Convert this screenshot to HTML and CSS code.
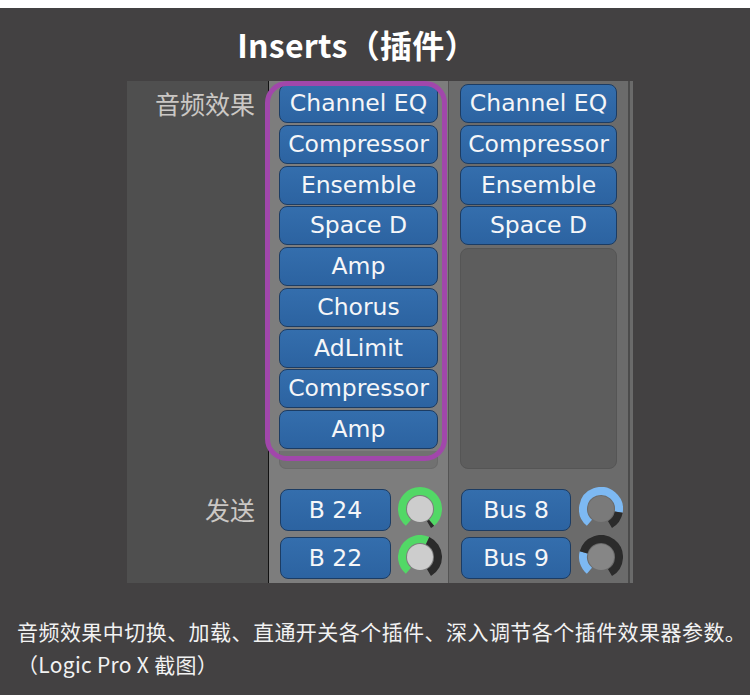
FILE: index.html
```html
<!DOCTYPE html>
<html lang="zh">
<head>
<meta charset="utf-8">
<title>Inserts</title>
<link rel="stylesheet" href="styles.css">
</head>
<body>
<div class="topstrip"></div>
<h1 class="title">Inserts（插件）</h1>
<div class="panel">
  <div class="label label-fx">音频效果</div>
  <div class="col col1 inserts">
    <div class="btn">Channel EQ</div>
    <div class="btn">Compressor</div>
    <div class="btn">Ensemble</div>
    <div class="btn">Space D</div>
    <div class="btn">Amp</div>
    <div class="btn">Chorus</div>
    <div class="btn">AdLimit</div>
    <div class="btn">Compressor</div>
    <div class="btn">Amp</div>
    <div class="slot slot-short"></div>
  </div>
  <div class="col col2 inserts">
    <div class="btn">Channel EQ</div>
    <div class="btn">Compressor</div>
    <div class="btn">Ensemble</div>
    <div class="btn">Space D</div>
    <div class="slot slot-long"></div>
  </div>
  <div class="edge"></div>
  <div class="label label-send">发送</div>
  <div class="col col1 sends">
    <div class="send-row">
      <div class="btn send-btn">B 24</div>
      <svg class="knob" viewBox="0 0 44 44" width="44" height="44">
        <path d="M10.43 35.79 A18 18 0 1 1 33.57 35.79" class="arc-green"/>
        <path d="M33.57 35.79 A18 18 0 0 1 31 37.59" class="arc-dark"/>
        <circle cx="22" cy="22" r="13" class="cap-light"/>
      </svg>
    </div>
    <div class="send-row">
      <div class="btn send-btn">B 22</div>
      <svg class="knob" viewBox="0 0 44 44" width="44" height="44">
        <path d="M10.43 35.79 A18 18 0 0 1 29.61 5.69" class="arc-green"/>
        <path d="M29.61 5.69 A18 18 0 0 1 31 37.59" class="arc-dark"/>
        <circle cx="22" cy="22" r="13" class="cap-light"/>
      </svg>
    </div>
  </div>
  <div class="col col2 sends">
    <div class="send-row">
      <div class="btn send-btn">Bus 8</div>
      <svg class="knob" viewBox="0 0 44 44" width="44" height="44">
        <path d="M10.43 35.79 A18 18 0 1 1 39.73 25.13" class="arc-blue"/>
        <path d="M39.73 25.13 A18 18 0 0 1 31 37.59" class="arc-dark"/>
        <circle cx="22" cy="22" r="13" class="cap-dark"/>
      </svg>
    </div>
    <div class="send-row">
      <div class="btn send-btn">Bus 9</div>
      <svg class="knob" viewBox="0 0 44 44" width="44" height="44">
        <path d="M10.43 35.79 A18 18 0 0 1 4.61 17.34" class="arc-blue"/>
        <path d="M4.61 17.34 A18 18 0 1 1 31 37.59" class="arc-dark"/>
        <circle cx="22" cy="22" r="13" class="cap-mid"/>
      </svg>
    </div>
  </div>
  <div class="highlight"></div>
</div>
<div class="caption">
  <p>音频效果中切换、加载、直通开关各个插件、深入调节各个插件效果器参数。</p>
  <p class="caption-sub">（Logic Pro X 截图）</p>
</div>
</body>
</html>
```

FILE: styles.css
```css
html, body {
  margin: 0;
  padding: 0;
}
body {
  background: #434142;
  width: 750px;
  height: 695px;
  overflow: hidden;
  font-family: "Noto Sans CJK SC", "Noto Sans", sans-serif;
}
.topstrip {
  height: 8px;
  background: #ffffff;
}
.title {
  margin: 0;
  height: 73px;
  line-height: 72px;
  font-size: 32px;
  font-weight: 700;
  color: #ffffff;
  text-align: center;
  padding-right: 36px;
  letter-spacing: 0.3px;
  font-family: "Noto Sans CJK SC", "Noto Sans", sans-serif;
}
.panel {
  position: relative;
  margin-left: 127px;
  width: 506px;
  display: grid;
  grid-template-columns: 141px 180px 180px 5px;
  grid-template-rows: 397px 105px;
}
.label {
  background: #4f4f4f;
  color: #cbc8c5;
  font-size: 25px;
  text-align: right;
  padding-right: 13px;
}
.label-fx {
  line-height: 44px;
}
.label-send {
  line-height: 42px;
  padding-top: 10px;
}
.col {
  box-sizing: border-box;
}
.col1 {
  background: #7d7d7d;
  border-left: 1px solid #121212;
  padding-left: 10px;
  padding-right: 10px;
}
.col2 {
  background: #6b6b6b;
  border-left: 1px solid #545454;
  padding-left: 11px;
  padding-right: 11px;
}
.inserts {
  padding-top: 3px;
  display: flex;
  flex-direction: column;
  gap: 1.75px;
}
.edge {
  grid-row: 1 / span 2;
  grid-column: 4;
  background: #6a6a6a;
  border-left: 2px solid #4b4b4b;
}
.btn {
  box-sizing: border-box;
  height: 39px;
  flex: none;
  background: linear-gradient(#346ead, #2c63a1);
  border: 1.5px solid #1c3c63;
  border-radius: 8px;
  color: #f5f6f8;
  font-family: "DejaVu Sans", "Liberation Sans", sans-serif;
  font-size: 23.5px;
  line-height: 37px;
  text-align: center;
  white-space: nowrap;
}
.slot {
  box-sizing: border-box;
  flex: none;
  margin-top: 0.5px;
}
.slot-short {
  height: 18px;
  background: #717171;
  border: 1px solid #6a6a6a;
  border-top: none;
  border-radius: 0 0 7px 7px;
}
.slot-long {
  height: 221px;
  background: #5d5d5d;
  border: 1px solid #555555;
  border-radius: 8px;
}
.sends {
  padding-top: 11px;
  display: flex;
  flex-direction: column;
  gap: 6px;
}
.send-row {
  display: flex;
  align-items: center;
  gap: 7px;
  padding-left: 1px;
}
.col2 .send-row {
  gap: 8px;
}
.send-btn {
  height: 42px;
  line-height: 40px;
  width: 111px;
}
.col2 .send-btn {
  width: 110px;
}
.knob {
  display: block;
  flex: none;
  margin-top: -2px;
}
.knob path {
  fill: none;
  stroke-width: 8;
}
.arc-green { stroke: #52d866; }
.arc-blue { stroke: #7db9f3; }
.arc-dark { stroke: #2b2b2b; }
.cap-light { fill: #cdcdcd; }
.cap-dark { fill: #7a7a7a; }
.cap-mid { fill: #868686; }
.highlight {
  position: absolute;
  left: 138px;
  top: 0;
  width: 182px;
  height: 380px;
  box-sizing: border-box;
  border: 5px solid #a147ab;
  border-radius: 22px;
  pointer-events: none;
}
.caption {
  margin-top: 32px;
  padding-left: 17px;
  color: #f2f2f2;
  font-size: 21px;
  line-height: 33px;
}
.caption p {
  margin: 0;
  white-space: nowrap;
  letter-spacing: 0.45px;
}
.caption .caption-sub {
  letter-spacing: 0.3px;
}
```
